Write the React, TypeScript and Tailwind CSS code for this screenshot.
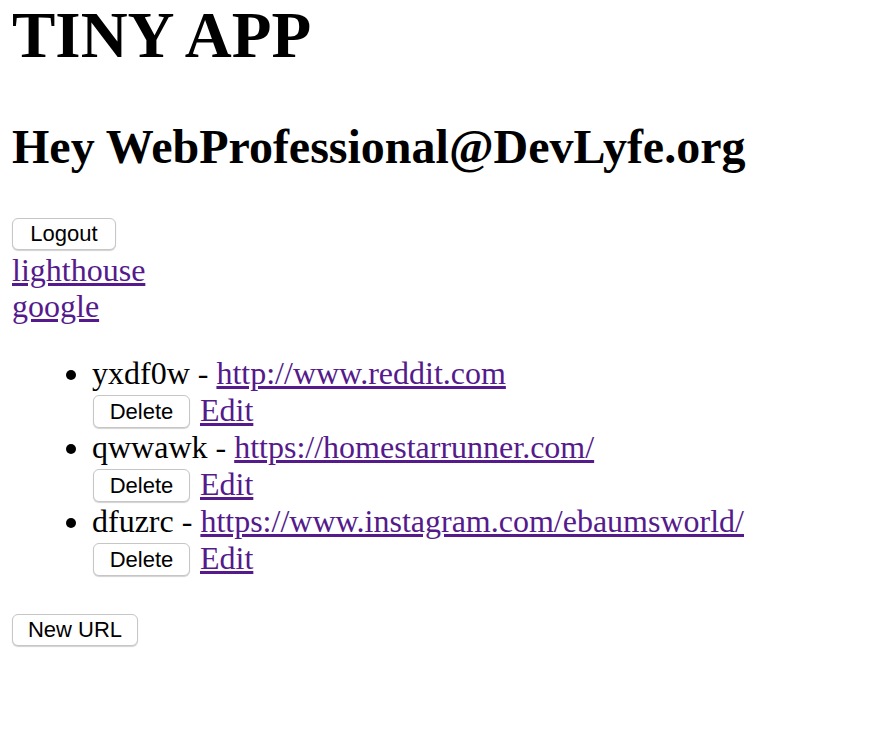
import * as React from "react";

const urls = [
  { id: "yxdf0w", long: "http://www.reddit.com" },
  { id: "qwwawk", long: "https://homestarrunner.com/" },
  { id: "dfuzrc", long: "https://www.instagram.com/ebaumsworld/" },
];

function Btn({ children, w }: { children: React.ReactNode; w: string }) {
  return (
    <button
      className={
        "flex items-center justify-center rounded-[6px] border border-[#c6c6c6] bg-white text-[22px] leading-none text-black shadow-[0_1px_1px_rgba(0,0,0,0.18)] " +
        w
      }
      style={{ fontFamily: '"Liberation Sans", Arial, sans-serif' }}
    >
      {children}
    </button>
  );
}

export default function App() {
  return (
    <div
      className="min-h-[742px] bg-white pl-[12px] text-[32px] leading-[36px] text-black"
      style={{ fontFamily: '"Liberation Serif", "Times New Roman", serif' }}
    >
      <h1 className="-mt-[1px] h-[72px] text-[65px] font-bold leading-[72px]">TINY APP</h1>
      <h2 className="mt-[52px] h-[48px] text-[48px] font-bold leading-[48px]">
        Hey WebProfessional@DevLyfe.org
      </h2>
      <div className="mt-[45px] flex h-[36px] items-center">
        <Btn w="w-[104px] h-[32px]">Logout</Btn>
      </div>
      <a href="#" className="block w-fit text-[#551a8b] underline">
        lighthouse
      </a>
      <a href="#" className="block w-fit text-[#551a8b] underline">
        google
      </a>
      <ul className="mt-[31px] list-disc pl-[80px]">
        {urls.map((u) => (
          <li key={u.id} className="h-[74px]">
            <div className="h-[36px]">
              {u.id} -{" "}
              <a href="#" className="text-[#551a8b] underline">
                {u.long}
              </a>
            </div>
            <div className="flex h-[38px] items-start gap-[10px]">
              <div className="ml-[1px] mt-[4px]">
                <Btn w="w-[97px] h-[33px]">Delete</Btn>
              </div>
              <a href="#" className="mt-[1px] text-[#551a8b] underline">
                Edit
              </a>
            </div>
          </li>
        ))}
      </ul>
      <div className="mt-[37px]">
        <Btn w="w-[126px] h-[32px]">New URL</Btn>
      </div>
    </div>
  );
}
